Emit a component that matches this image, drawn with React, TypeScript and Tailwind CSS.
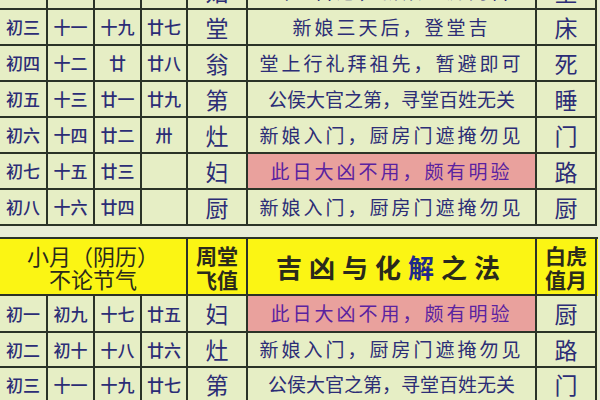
import React from "react";

const FONT = { fontFamily: '"Noto Sans CJK SC", "Noto Sans", sans-serif' };

type Row = { c: string[]; god: string; text: string; tiger: string; bad?: boolean };

const top: Row[] = [
  { c: ["初二", "初十", "十八", "廿六"], god: "姑", text: "出入吉道，新娘入房门吉", tiger: "堂" },
  { c: ["初三", "十一", "十九", "廿七"], god: "堂", text: "新娘三天后，登堂吉", tiger: "床" },
  { c: ["初四", "十二", "廿", "廿八"], god: "翁", text: "堂上行礼拜祖先，暂避即可", tiger: "死" },
  { c: ["初五", "十三", "廿一", "廿九"], god: "第", text: "公侯大官之第，寻堂百姓无关", tiger: "睡" },
  { c: ["初六", "十四", "廿二", "卅"], god: "灶", text: "新娘入门，厨房门遮掩勿见", tiger: "门" },
  { c: ["初七", "十五", "廿三", ""], god: "妇", text: "此日大凶不用，颇有明验", tiger: "路", bad: true },
  { c: ["初八", "十六", "廿四", ""], god: "厨", text: "新娘入门，厨房门遮掩勿见", tiger: "厨" },
];

const bottom: Row[] = [
  { c: ["初一", "初九", "十七", "廿五"], god: "妇", text: "此日大凶不用，颇有明验", tiger: "厨", bad: true },
  { c: ["初二", "初十", "十八", "廿六"], god: "灶", text: "新娘入门，厨房门遮掩勿见", tiger: "路" },
  { c: ["初三", "十一", "十九", "廿七"], god: "第", text: "公侯大官之第，寻堂百姓无关", tiger: "门" },
];

const widths = ["w-[48px]", "w-[47px]", "w-[47px]", "w-[46px]"];

function DataRow({ r, h }: { r: Row; h: string }) {
  const long = r.text.length > 12;
  return (
    <div className={`flex ${h} text-[#2c2d76]`}>
      {r.c.map((t, i) => (
        <div
          key={i}
          className={`${widths[i]} flex items-center justify-center border-r-2 border-b-2 border-[#2b3327] text-[17px] font-medium`}
        >
          {t}
        </div>
      ))}
      <div className="w-[60px] flex items-center justify-center border-r-2 border-b-2 border-[#2b3327] text-[23px]">
        {r.god}
      </div>
      <div
        className={`w-[289px] flex items-center justify-center border-r-2 border-b-2 border-[#2b3327] text-[19px] ${
          long ? "tracking-[0px]" : "tracking-[3px]"
        } ${r.bad ? "bg-[#e9a19d] text-[#5a22a0]" : ""}`}
      >
        {r.text}
      </div>
      <div className="w-[60px] flex items-center justify-center border-r-2 border-b-2 border-[#2b3327] text-[23px]">
        {r.tiger}
      </div>
    </div>
  );
}

export default function App() {
  return (
    <div className="w-[600px] h-[400px] overflow-hidden bg-[#e8ecd6]" style={FONT}>
      <div className="w-[598px] bg-[#e6eec5] -mt-[26px]">
        {top.map((r, i) => (
          <DataRow key={i} r={r} h="h-[36px]" />
        ))}
      </div>
      <div className="h-[11px]" />
      <div className="w-[598px] bg-[#e6eec5] border-t-2 border-[#2b3327]">
        <div className="flex h-[57px] bg-[#fbf514] text-[#2a2a1c]">
          <div className="w-[188px] flex flex-col items-center justify-center border-r-2 border-b-2 border-[#2b3327] text-[22px] leading-[23px]">
            <div>小月（阴历）</div>
            <div>不论节气</div>
          </div>
          <div className="w-[60px] flex flex-col items-center justify-center border-r-2 border-b-2 border-[#2b3327] text-[21px] font-bold leading-[24px]">
            <div>周堂</div>
            <div>飞值</div>
          </div>
          <div className="w-[289px] flex items-center justify-center border-r-2 border-b-2 border-[#2b3327] text-[26px] font-bold tracking-[7px]">
            <span>
              吉凶与化<span className="text-[#1f2a8c]">解</span>之法
            </span>
          </div>
          <div className="w-[60px] flex flex-col items-center justify-center border-r-2 border-b-2 border-[#2b3327] text-[21px] font-bold leading-[24px]">
            <div>白虎</div>
            <div>值月</div>
          </div>
        </div>
        {bottom.map((r, i) => (
          <DataRow key={i} r={r} h={i === 0 ? "h-[37px]" : "h-[35px]"} />
        ))}
      </div>
    </div>
  );
}
